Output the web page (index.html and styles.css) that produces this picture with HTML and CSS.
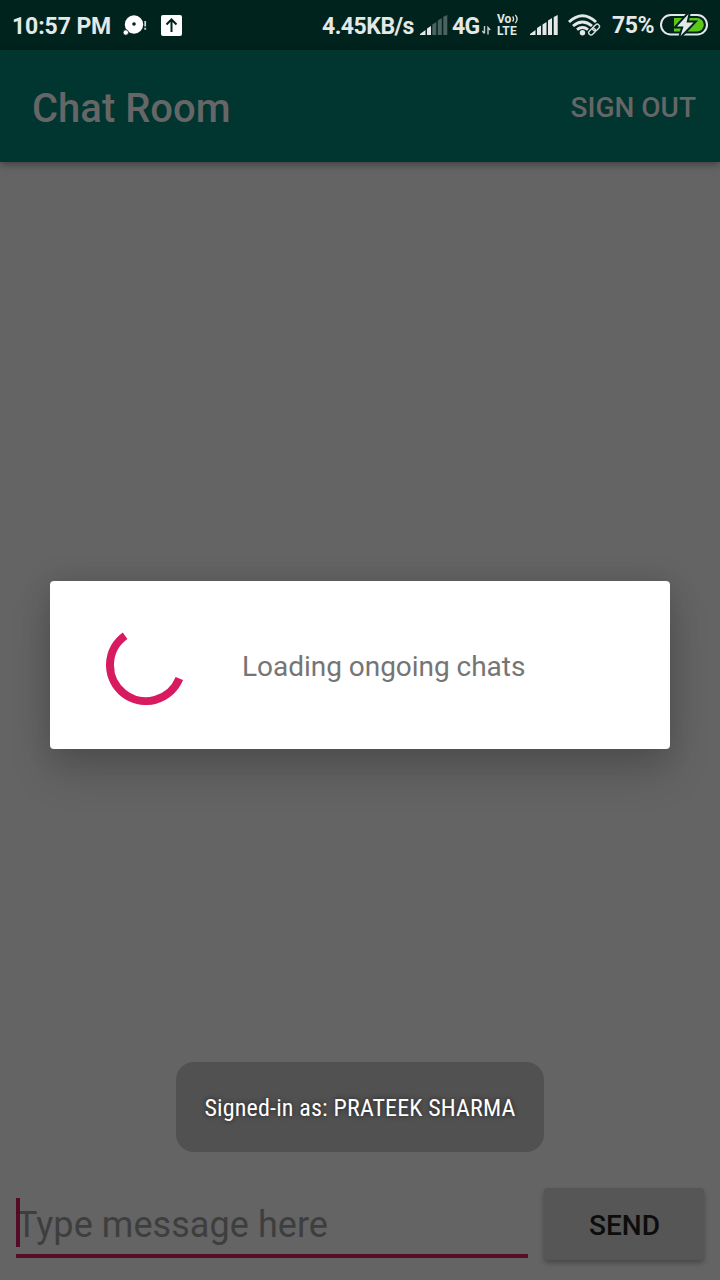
FILE: index.html
```html
<!DOCTYPE html>
<html lang="en">
<head>
<meta charset="utf-8">
<title>Chat Room</title>
<link rel="stylesheet" href="styles.css">
</head>
<body>
<div class="screen">
  <div class="status-bar">
    <span class="clock">10:57 PM</span>
    <svg class="ic-notify" width="26" height="22" viewBox="0 0 26 22">
      <circle cx="11" cy="9.500" r="9.200" fill="#fff"/><circle cx="11" cy="9" r="1.800" fill="#00231e"/>
      <circle cx="2.800" cy="17.500" r="2.700" fill="#fff" stroke="#00231e" stroke-width=".8"/>
      <path d="M22.200 6v5.500M22.200 12.800v2" stroke="#cdd4d3" stroke-width="1.800"/>
    </svg>
    <svg class="ic-upload" width="21" height="21" viewBox="0 0 21 21">
      <rect width="21" height="21" rx="2" fill="#fff"/>
      <path d="M10.500 17V5M5.500 9.500l5-5 5 5" fill="none" stroke="#00231e" stroke-width="2"/>
    </svg>
    <div class="status-right">
      <span class="speed">4.45KB/s</span>
      <svg class="ic-sig1" width="28" height="20" viewBox="0 0 28 20">
        <path d="M0 20v-1l5.500-4v5zM7 13.500l4-2.500v9H7z" fill="#e4e8e7"/>
        <path d="M12.300 9.500l4-2.400V20h-4zM17.800 5.500l4-2.400V20h-4zM23.300 1.800L27.300 0v20h-4z" fill="#4c625e"/>
      </svg>
      <span class="net">4G</span>
      <svg class="ic-data" width="9" height="9" viewBox="0 0 9 9"><path d="M2.500 0v7M.3 5l2.200 2.500M6 8.500V1.500l2.200 2.500" fill="none" stroke="#c4cecc" stroke-width="1.400"/></svg>
      <div class="volte">
        <div class="vo"><span>Vo</span><svg width="7" height="10" viewBox="0 0 7 10"><path d="M.6 2.500q2 2.500 0 5M3.300 .8q3.600 4.200 0 8.400" fill="none" stroke="#e0e5e4" stroke-width="1.300"/></svg></div>
        <span class="lte">LTE</span>
      </div>
      <svg class="ic-sig2" width="28" height="20" viewBox="0 0 28 20">
        <path d="M0 20v-1l5.500-4v5zM7 13l4-2.400V20H7zM12.500 9.500l4-2.400V20h-4zM18 5.500l4-2.400V20h-4zM23.700 2l4-2v20h-4z" fill="#e4e8e7"/>
      </svg>
      <svg class="ic-wifi" width="33" height="22" viewBox="0 0 33 22">
        <g fill="none" stroke="#e4e8e7" stroke-width="2.900">
          <path d="M1 8Q14.500-4.500 28 8"/><path d="M5 12q9.500-8 19 0"/><path d="M9 15.600q5.500-4.200 11 0"/>
        </g>
        <circle cx="14.500" cy="18.800" r="2.700" fill="#e4e8e7"/>
        <path d="M22.500 20l8-8" stroke="#00231e" stroke-width="6"/>
        <g fill="none" stroke="#dce1e0" stroke-width="1.400">
          <rect x="20.300" y="15.300" width="7.600" height="4.600" rx="2.300" transform="rotate(-45 24.100 17.600)"/>
          <rect x="24.300" y="11.300" width="7.600" height="4.600" rx="2.300" transform="rotate(-45 28.100 13.600)"/>
        </g>
      </svg>
      <span class="pct">75%</span>
      <svg class="ic-batt" width="48" height="22" viewBox="0 0 48 22">
        <rect x="1" y="1" width="46" height="19.500" rx="9.750" fill="none" stroke="#e4e8e7" stroke-width="2"/>
        <path d="M14 4H37a6.800 6.800 0 0 1 0 13.600H14z" fill="#5ac71a"/>
        <path d="M28.500 0L17 12.500h6.500L20.500 22 33.500 8.500h-7z" fill="#e4e8e7" stroke="#00231e" stroke-width="4" paint-order="stroke"/>
      </svg>
    </div>
  </div>
  <header class="app-bar">
    <h1 class="title">Chat Room</h1>
    <span class="sign-out">SIGN OUT</span>
  </header>
  <main class="messages"></main>
  <footer class="composer">
    <div class="field"><span class="hint">Type message here</span><span class="caret"></span></div>
    <div class="send">SEND</div>
  </footer>
  <div class="dialog">
    <svg class="spinner" width="80" height="80" viewBox="0 0 80 80">
      <path d="M19.100 10.700A36 36 0 1 0 73.350 53.550" fill="none" stroke="#d81b60" stroke-width="8"/>
    </svg>
    <span class="loading">Loading ongoing chats</span>
  </div>
  <div class="toast"><span class="toast-text">Signed-in as: PRATEEK SHARMA</span></div>
</div>
</body>
</html>
```
FILE: styles.css
```css
* { box-sizing: border-box; }
body { margin: 0; font-family: Roboto, "Liberation Sans", sans-serif; }
.screen {
  position: relative;
  width: 720px;
  height: 1280px;
  overflow: hidden;
  display: flex;
  flex-direction: column;
  background: #646464;
  white-space: nowrap;
}
.status-bar {
  height: 50px;
  flex: none;
  display: flex;
  align-items: flex-start;
  padding: 0 12px;
  background: #00231e;
  color: #e4e8e7;
  font-size: 23px;
  font-weight: 700;
  line-height: 54px;
}
.status-bar svg { flex: none; display: block; }
.clock { width: 111px; letter-spacing: -.1px; }
.ic-notify { margin-top: 15px; }
.ic-upload { margin: 15px 0 0 12px; }
.status-right { margin-left: auto; display: flex; align-items: flex-start; }
.speed { width: 98px; letter-spacing: -.5px; }
.ic-sig1 { margin-top: 15px; }
.net { margin-left: 4px; width: 30px; letter-spacing: -.6px; }
.ic-data { margin-top: 26px; }
.volte { margin: 13px 0 0 6px; width: 33px; font-size: 12px; line-height: 12px; }
.vo { display: flex; gap: 1px; height: 12px; }
.vo svg { margin-top: 1px; }
.lte { display: block; height: 12px; letter-spacing: .2px; }
.ic-sig2 { margin-top: 15px; }
.ic-wifi { margin: 14px 0 0 10px; }
.pct { width: 48px; margin-left: 11px; letter-spacing: -.5px; line-height: 52px; }
.ic-batt { margin-top: 14px; }
.app-bar {
  height: 112px;
  flex: none;
  display: flex;
  align-items: center;
  justify-content: space-between;
  padding: 4px 24px 0 32px;
  background: #003530;
  color: #666;
  box-shadow: 0 2px 8px rgba(0, 0, 0, .4);
}
.title { margin: 0; font-size: 40px; font-weight: 500; }
.sign-out { font-size: 28px; font-weight: 500; margin-top: -2px; }
.messages { flex: 1; }
.composer { display: flex; align-items: flex-start; height: 92px; padding: 0 16px; gap: 16px; }
.field {
  position: relative;
  width: 512px;
  height: 70px;
  border-bottom: 4px solid #560b26;
  padding-top: 16px;
}
.caret { position: absolute; left: 0; top: 10px; width: 4px; height: 49px; background: rgba(84, 5, 33, .94); }
.hint { font-size: 36px; line-height: 42px; letter-spacing: .06px; color: #3e3e3e; display: block; }
.send {
  width: 160px;
  height: 72px;
  border-radius: 4px;
  background: #565656;
  color: #0d0d0d;
  font-size: 28px;
  font-weight: 500;
  line-height: 76px;
  padding-left: 1px;
  text-align: center;
  box-shadow: 0 3px 5px rgba(0, 0, 0, .28);
}
.dialog {
  position: absolute;
  left: 50px;
  top: 581px;
  width: 620px;
  height: 168px;
  border-radius: 4px;
  display: flex;
  align-items: center;
  padding-left: 56px;
  gap: 56px;
  background: #fff;
  color: #757575;
  box-shadow: 0 24px 40px rgba(0, 0, 0, .17), 0 0 30px rgba(0, 0, 0, .13);
}
.loading { font-size: 28px; padding-top: 3px; letter-spacing: -.03px; }
.toast {
  position: absolute;
  left: 176px;
  top: 1062px;
  width: 368px;
  height: 90px;
  border-radius: 18px;
  display: flex;
  align-items: center;
  justify-content: center;
  background: #515151;
  color: #fff;
}
.toast-text {
  font-family: "Roboto Condensed", Roboto, sans-serif;
  font-size: 24px;
  font-stretch: condensed;
  letter-spacing: .17px;
  text-shadow: 0 0 5px rgba(0, 0, 0, .65);
  padding-top: 2px;
}
```
